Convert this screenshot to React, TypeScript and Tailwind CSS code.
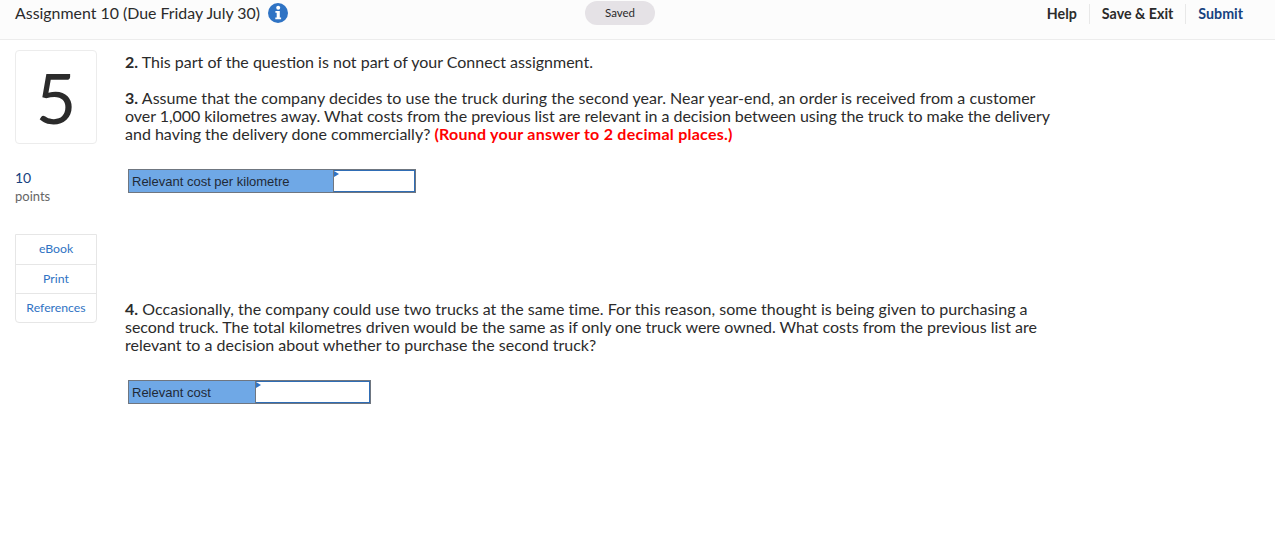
function InfoIcon() {
  return (
    <svg width="20" height="20" viewBox="0 0 20 20">
      <circle cx="10" cy="10" r="10" fill="#2f73c4" />
      <circle cx="10.2" cy="4.8" r="2" fill="#fff" />
      <path d="M7.4 8h4.4v6.6h1.3V16.300H7.300v-1.700h1.400V9.700H7.400z" fill="#fff" />
    </svg>
  );
}

function CostRow({ label, labelWidth, inputWidth }: { label: string; labelWidth: string; inputWidth: string }) {
  return (
    <div className="ml-[3px] flex h-6 w-fit border border-[#6f7680] font-['Liberation_Sans',sans-serif] text-[13px] text-[#1f2a37]">
      <div className={`flex items-center border-r border-[#6f7680] bg-[#6fa8e6] pl-[3px] pt-px ${labelWidth}`}>{label}</div>
      <div className={`relative border border-l-0 border-[#2f6db5] bg-white ${inputWidth}`}>
        <div className="absolute left-0 top-0 h-0 w-0 border-y-[3px] border-l-[5px] border-y-transparent border-l-[#2f73c4]" />
      </div>
    </div>
  );
}

export default function App() {
  return (
    <div className="h-[549px] w-[1275px] overflow-hidden bg-white font-['Lato',sans-serif] text-[#2b2b2b]">
      <header className="flex h-10 items-start border-b border-[#ececec] bg-[#fcfcfc] pl-[15px] pr-[32px]">
        <div className="flex w-[570px] items-center gap-2 pt-[3px]">
          <span className="text-[15.900px] leading-5">Assignment 10 (Due Friday July 30)</span>
          <InfoIcon />
        </div>
        <div className="mt-[1px] flex h-6 w-[70px] items-center justify-center rounded-full bg-[#e5e2e6] text-[11.500px]">
          Saved
        </div>
        <nav className="mt-1 flex flex-1 items-start justify-end text-[14.250px] font-bold leading-5">
          <a className="h-5 border-r border-[#e8e8e8] pr-3">Help</a>
          <a className="h-5 border-r border-[#e8e8e8] px-3">Save &amp; Exit</a>
          <a className="h-5 pl-3 text-[#17427f]">Submit</a>
        </nav>
      </header>

      <div className="flex pl-[15px] pt-[10px]">
        <aside className="w-[82px] shrink-0">
          <div className="flex h-[94px] items-center justify-center rounded border border-[#ececec] text-[70px] leading-none">
            5
          </div>
          <div className="mt-[25px] text-sm leading-[18px] text-[#17427f]">10</div>
          <div className="text-[13px] leading-[18px] text-[#666]">points</div>
          <div className="mt-[29px] rounded-b border border-[#e6e6e6] text-center text-[12.250px] text-[#2f73c4]">
            <div className="flex h-[30px] items-center justify-center border-b border-[#e6e6e6]">eBook</div>
            <div className="flex h-[29px] items-center justify-center border-b border-[#e6e6e6] pt-px">Print</div>
            <div className="flex h-[28px] items-center justify-center">References</div>
          </div>
        </aside>

        <main className="ml-[28px] flex-1 whitespace-nowrap text-base leading-[18px]">
          <p className="mt-[3px]">
            <b>2.</b> This part of the question is not part of your Connect assignment.
          </p>
          <p className="mt-[18px]">
            <span className="tracking-[0.04px]">
              <b>3.</b> Assume that the company decides to use the truck during the second year. Near year-end, an order is received from a customer
            </span>
            <br />
            <span className="tracking-[-0.045px]">
              over 1,000 kilometres away. What costs from the previous list are relevant in a decision between using the truck to make the delivery
            </span>
            <br />
            and having the delivery done commercially? <b className="tracking-[0.25px] text-[#ff0000]">(Round your answer to 2 decimal places.)</b>
          </p>
          <div className="mt-[26px]">
            <CostRow label="Relevant cost per kilometre" labelWidth="w-[205px]" inputWidth="w-[81px]" />
          </div>
          <p className="mt-[107px]">
            <span className="tracking-[0.025px]">
              <b>4.</b> Occasionally, the company could use two trucks at the same time. For this reason, some thought is being given to purchasing a
            </span>
            <br />
            <span className="tracking-[-0.025px]">
              second truck. The total kilometres driven would be the same as if only one truck were owned. What costs from the previous list are
            </span>
            <br />
            relevant to a decision about whether to purchase the second truck?
          </p>
          <div className="mt-[26px]">
            <CostRow label="Relevant cost" labelWidth="w-[127px]" inputWidth="w-[114px]" />
          </div>
        </main>
      </div>
    </div>
  );
}
